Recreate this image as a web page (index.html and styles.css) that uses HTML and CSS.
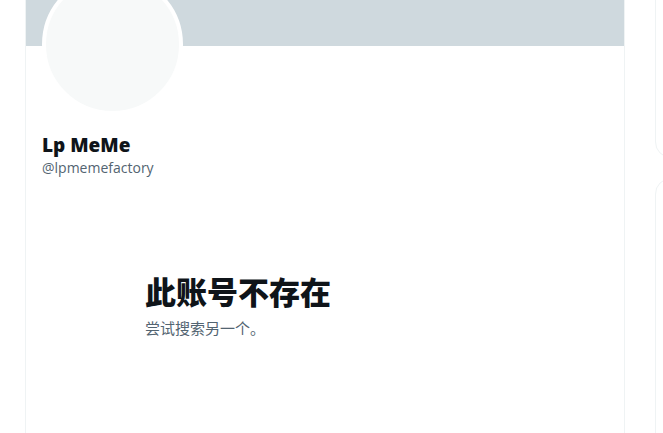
FILE: index.html
```html
<!DOCTYPE html>
<html lang="zh">
  <head>
    <meta charset="UTF-8" />
    <title>Lp MeMe (@lpmemefactory)</title>
    <meta name="viewport" content="width=device-width, initial-scale=1.0" />
    <link rel="stylesheet" href="styles.css">
  </head>
  <body>
    <div class="page">
      <main class="column">
        <div class="banner"></div>
        <div class="profile">
          <div class="avatar"></div>
          <h2 class="name">Lp MeMe</h2>
          <div class="handle">@lpmemefactory</div>
        </div>
        <div class="empty">
          <h1 class="empty-title">此账号不存在</h1>
          <p class="empty-text">尝试搜索另一个。</p>
        </div>
      </main>

      <aside class="sidebar">
        <div class="card card-top"></div>
        <div class="card card-next"></div>
      </aside>
    </div>
  </body>
</html>
```

FILE: styles.css
```css
/* --- Reset & base styles --- */
*, *::before, *::after {
  box-sizing: border-box;
  margin: 0;
  padding: 0;
}
body {
  font-family: "Segoe UI", "Open Sans", "Liberation Sans", "Noto Sans CJK SC", sans-serif;
  color: #0f1419;
  background: #fff;
  overflow: hidden;
}

/* --- Page layout --- */
.page {
  display: flex;
  gap: 30px;
  padding-left: 25px;
  height: 433px;
  overflow: hidden;
}
.column {
  width: 600px;
  flex-shrink: 0;
  border-left: 1px solid #eff3f4;
  border-right: 1px solid #eff3f4;
}

/* --- Profile header --- */
.banner {
  height: 46px;
  background: #cfd9de;
}
.profile {
  padding: 0 16px;
}
.avatar {
  width: 141px;
  height: 141px;
  margin-top: -72px;
  border-radius: 50%;
  border: 4px solid #fff;
  background: #f7f9f9;
}
.name {
  margin-top: 18px;
  font-size: 19px;
  font-weight: 800;
  line-height: 24px;
}
.handle {
  margin-top: 1px;
  font-size: 14px;
  line-height: 20px;
  color: #536471;
}

/* --- Empty state --- */
.empty {
  width: 400px;
  margin: 95px auto 0;
  padding: 0 20px;
}
.empty-title {
  font-family: "Noto Sans CJK SC", sans-serif;
  font-size: 31px;
  font-weight: 800;
  line-height: 36px;
}
.empty-text {
  margin-top: 9px;
  font-family: "Noto Sans CJK SC", sans-serif;
  font-size: 15px;
  line-height: 20px;
  color: #536471;
}

/* --- Sidebar cards --- */
.sidebar {
  display: flex;
  flex-direction: column;
  gap: 20px;
  width: 350px;
  flex-shrink: 0;
}
.card {
  flex-shrink: 0;
  border: 1px solid #eff3f4;
  border-radius: 16px;
  background: #fff;
}
.card-top {
  height: 178px;
  margin-top: -20px;
}
.card-next {
  height: 400px;
}
```
